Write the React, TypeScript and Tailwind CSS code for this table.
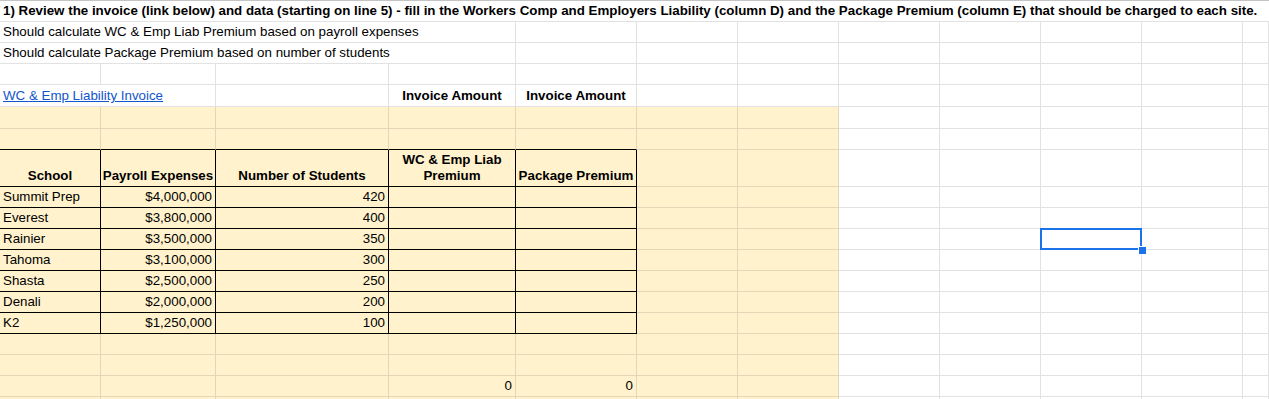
import React from 'react';

type Cell = {
  text?: React.ReactNode;
  span?: 1 | 2 | 4 | 12;
  align?: 'left' | 'center' | 'right';
  bold?: boolean;
  rightBlack?: boolean;
  bottomBlack?: boolean;
  selected?: boolean;
  wrap?: boolean;
};

type Row = { h: string; cells: Cell[] };

const spanCls = { 1: '', 2: 'col-span-2', 4: 'col-span-4', 12: 'col-span-12' };
const spanLen = { 1: 1, 2: 2, 4: 4, 12: 12 };

const empty = (n: number): Cell[] => Array.from({ length: n }, () => ({}));

const tableRow = (a: string, b: string, c: string): Cell[] => [
  { text: a, rightBlack: true, bottomBlack: true },
  { text: b, align: 'right', rightBlack: true, bottomBlack: true },
  { text: c, align: 'right', rightBlack: true, bottomBlack: true },
  { rightBlack: true, bottomBlack: true },
  { rightBlack: true, bottomBlack: true },
];

const schools: [string, string, string][] = [
  ['Summit Prep', '$4,000,000', '420'],
  ['Everest', '$3,800,000', '400'],
  ['Rainier', '$3,500,000', '350'],
  ['Tahoma', '$3,100,000', '300'],
  ['Shasta', '$2,500,000', '250'],
  ['Denali', '$2,000,000', '200'],
  ['K2', '$1,250,000', '100'],
];

const rows: Row[] = [
  {
    h: 'h-[21px]',
    cells: [
      {
        span: 12,
        bold: true,
        text: '1) Review the invoice (link below) and data (starting on line 5) - fill in the Workers Comp and Employers Liability (column D) and the Package Premium (column E) that should be charged to each site.',
      },
    ],
  },
  { h: 'h-[21px]', cells: [{ span: 4, text: 'Should calculate WC & Emp Liab Premium based on payroll expenses' }, ...empty(8)] },
  { h: 'h-[21px]', cells: [{ span: 4, text: 'Should calculate Package Premium based on number of students' }, ...empty(8)] },
  { h: 'h-[21px]', cells: empty(12) },
  {
    h: 'h-[22px]',
    cells: [
      {
        span: 2,
        text: (
          <span className="text-[#1155cc] underline">WC &amp; Emp Liability Invoice</span>
        ),
      },
      {},
      { text: 'Invoice Amount', bold: true, align: 'center' },
      { text: 'Invoice Amount', bold: true, align: 'center' },
      ...empty(7),
    ],
  },
  { h: 'h-[22px]', cells: empty(12) },
  {
    h: 'h-[21px]',
    cells: [
      { bottomBlack: true },
      { bottomBlack: true },
      { bottomBlack: true },
      { bottomBlack: true },
      { bottomBlack: true },
      ...empty(7),
    ],
  },
  {
    h: 'h-[37px]',
    cells: [
      { text: 'School', bold: true, align: 'center', rightBlack: true, bottomBlack: true },
      { text: 'Payroll Expenses', bold: true, align: 'center', rightBlack: true, bottomBlack: true },
      { text: 'Number of Students', bold: true, align: 'center', rightBlack: true, bottomBlack: true },
      { text: 'WC & Emp Liab Premium', bold: true, align: 'center', wrap: true, rightBlack: true, bottomBlack: true },
      { text: 'Package Premium', bold: true, align: 'center', rightBlack: true, bottomBlack: true },
      ...empty(7),
    ],
  },
  ...schools.map(([a, b, c], i) => ({
    h: 'h-[21px]',
    cells: [
      ...tableRow(a, b, c),
      ...empty(4),
      { selected: i === 2 },
      ...empty(2),
    ],
  })),
  { h: 'h-[21px]', cells: empty(12) },
  { h: 'h-[21px]', cells: empty(12) },
  {
    h: 'h-[21px]',
    cells: [...empty(3), { text: '0', align: 'right' }, { text: '0', align: 'right' }, ...empty(7)],
  },
  { h: 'h-[21px]', cells: empty(12) },
];

function SheetRow({ row, index }: { row: Row; index: number }) {
  let col = 0;
  return (
    <div
      className={`relative grid grid-cols-[101px_115px_173px_127px_121px_101px_101px_101px_101px_101px_101px_1fr] ${row.h} ${
        row.cells.some((c) => c.selected) ? 'z-10' : ''
      }`}
    >
      {row.cells.map((c, i) => {
        const span = c.span ?? 1;
        const start = col;
        col += spanLen[span];
        const yellow = index >= 5 && start < 7;
        const bg = yellow ? 'bg-[#fff2cc]' : 'bg-white';
        const br = c.rightBlack
          ? 'border-r-black'
          : yellow
          ? 'border-r-[#e2d8b8]'
          : 'border-r-[#e2e2e2]';
        const bb = c.bottomBlack
          ? 'border-b-black'
          : yellow
          ? 'border-b-[#e2d8b8]'
          : 'border-b-[#e2e2e2]';
        const rBorder = span === 12 ? 'border-r-0' : 'border-r';
        const justify =
          c.align === 'center'
            ? 'justify-center text-center'
            : c.align === 'right'
            ? 'justify-end text-right'
            : 'justify-start';
        return (
          <div
            key={i}
            className={`relative flex items-end ${justify} ${spanCls[span]} ${bg} ${rBorder} border-b ${br} ${bb} px-[3px] pb-[2px] ${
              c.bold ? 'font-bold' : ''
            } ${c.wrap ? 'leading-[16px]' : 'whitespace-nowrap leading-[16px]'} ${c.selected ? 'z-10' : ''}`}
          >
            {c.text !== undefined && (
              <span className={c.wrap ? 'px-[10px]' : 'overflow-visible'}>{c.text}</span>
            )}
            {c.selected && (
              <>
                <div className="absolute -left-[1px] -top-[1px] -right-[1px] -bottom-[1px] border-2 border-[#1a73e8]" />
                <div className="absolute -right-[5px] -bottom-[5px] z-20 h-[8px] w-[8px] border-l border-t border-l-white border-t-white bg-[#1a73e8]" />
              </>
            )}
          </div>
        );
      })}
    </div>
  );
}

export default function App() {
  return (
    <div className="w-[1269px] h-[399px] overflow-hidden bg-white border-t border-t-[#c4c4c4] font-['Liberation_Sans',Arial,sans-serif] text-[13.33px] text-black">
      {rows.map((r, i) => (
        <SheetRow key={i} row={r} index={i} />
      ))}
    </div>
  );
}
